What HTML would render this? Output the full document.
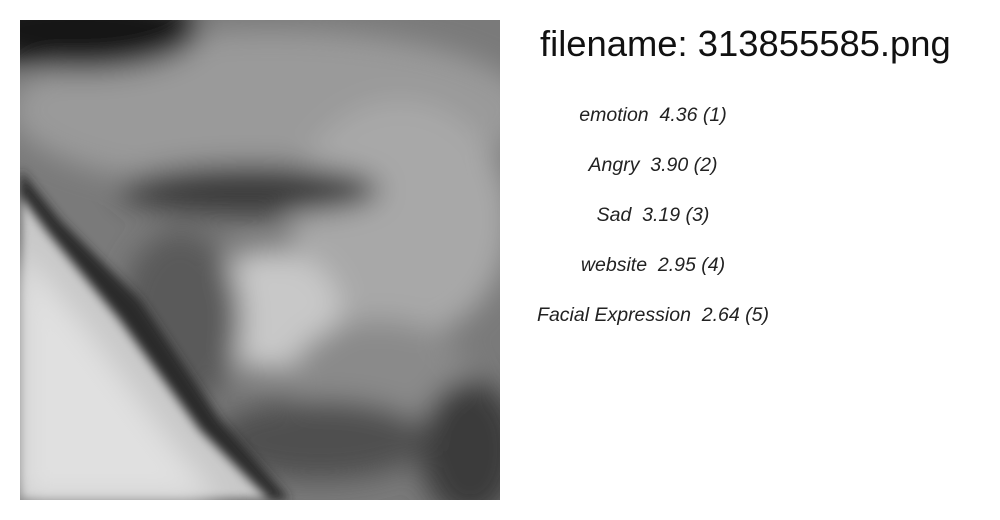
<!DOCTYPE html>
<html><head><style>
body{margin:0;width:1000px;height:520px;background:#fff;position:relative;overflow:hidden;font-family:"Liberation Sans",sans-serif}
svg{position:absolute;left:20px;top:20px}
h1{position:absolute;left:540px;top:23px;margin:0;font-weight:normal;font-size:36.4px;color:#111;white-space:nowrap}
.r{position:absolute;width:236px;left:535px;text-align:center;font-style:italic;font-size:19.5px;color:#222;white-space:nowrap}
</style></head><body>
<svg width="480" height="480" viewBox="0 0 480 480">
<defs>
<filter id="b" x="-20%" y="-20%" width="140%" height="140%"><feGaussianBlur stdDeviation="14"/></filter>
<filter id="b2"><feGaussianBlur stdDeviation="5"/></filter>
</defs>
<rect width="480" height="480" fill="#7a7a7a"/>
<g filter="url(#b)">
<ellipse cx="250" cy="90" rx="260" ry="80" fill="#9a9a9a"/>
<ellipse cx="380" cy="200" rx="110" ry="120" fill="#a8a8a8"/>
<ellipse cx="60" cy="10" rx="120" ry="40" fill="#151515"/>
<ellipse cx="230" cy="170" rx="130" ry="25" fill="#3a3a3a"/>
<ellipse cx="250" cy="290" rx="70" ry="60" fill="#c8c8c8"/>
<ellipse cx="160" cy="300" rx="60" ry="90" fill="#5a5a5a"/>
<ellipse cx="360" cy="360" rx="90" ry="60" fill="#8a8a8a"/>
<ellipse cx="450" cy="430" rx="50" ry="70" fill="#3a3a3a"/>
<ellipse cx="300" cy="420" rx="110" ry="40" fill="#505050"/>
</g>
<g filter="url(#b2)">
<path d="M0 150 L40 200 L120 280 L200 400 L270 480 L0 480Z" fill="#2a2a2a"/>
</g>
<path d="M0 175 L30 215 L100 300 L180 410 L250 480 L0 480Z" fill="#c8c8c8" filter="url(#b2)"/>
<path d="M0 230 L60 300 L150 420 L200 480 L0 480Z" fill="#e0e0e0" filter="url(#b)"/>
</svg>
<h1>filename: 313855585.png</h1>
<div class="r" style="top:104px">emotion&nbsp; 4.36 (1)</div>
<div class="r" style="top:154px">Angry&nbsp; 3.90 (2)</div>
<div class="r" style="top:204px">Sad&nbsp; 3.19 (3)</div>
<div class="r" style="top:254px">website&nbsp; 2.95 (4)</div>
<div class="r" style="top:304px">Facial Expression&nbsp; 2.64 (5)</div>
</body></html>
